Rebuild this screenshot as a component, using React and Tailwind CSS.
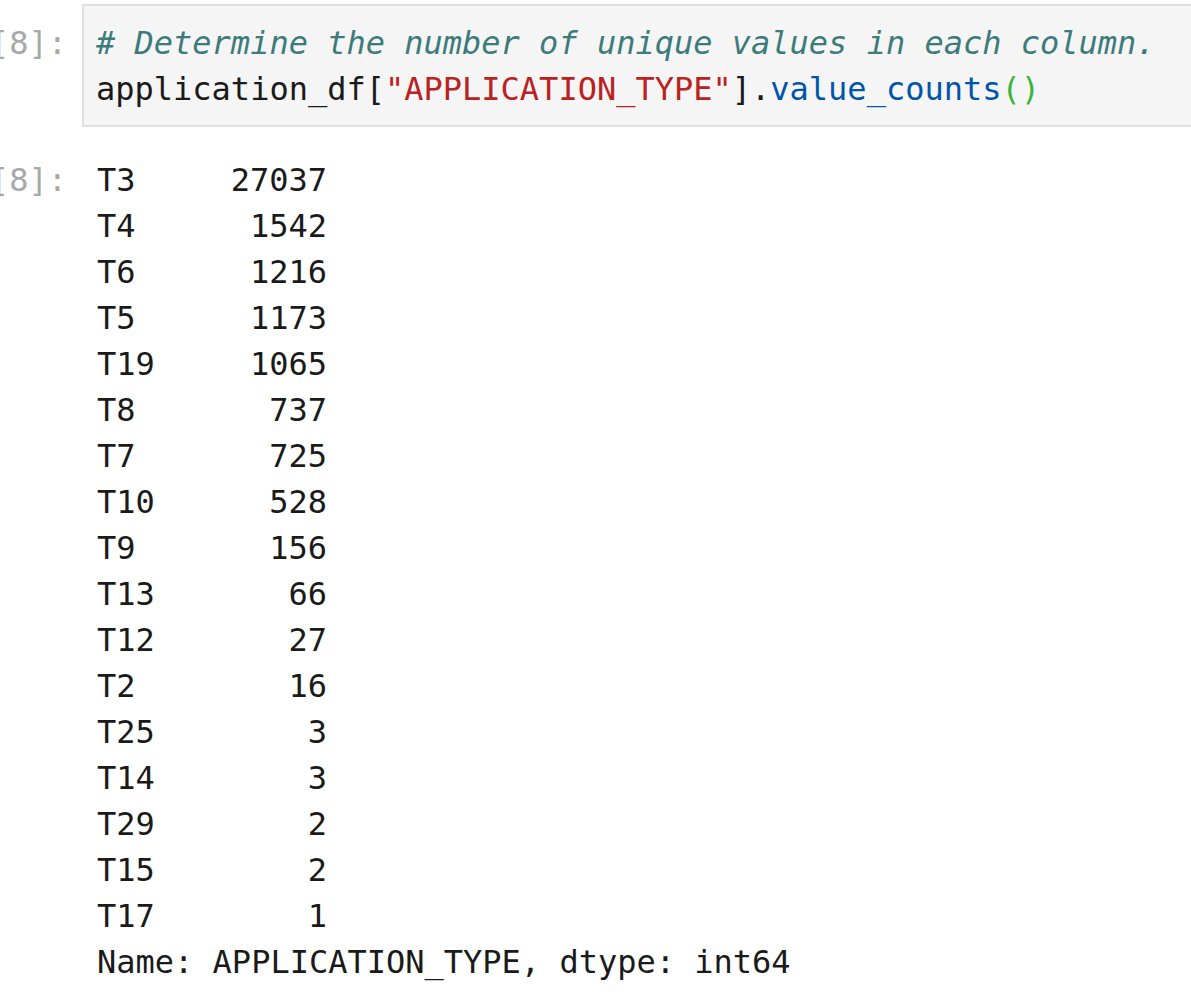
import React from 'react';

const rows = [
  ['T3', '27037'],
  ['T4', '1542'],
  ['T6', '1216'],
  ['T5', '1173'],
  ['T19', '1065'],
  ['T8', '737'],
  ['T7', '725'],
  ['T10', '528'],
  ['T9', '156'],
  ['T13', '66'],
  ['T12', '27'],
  ['T2', '16'],
  ['T25', '3'],
  ['T14', '3'],
  ['T29', '2'],
  ['T15', '2'],
  ['T17', '1'],
];

const mono = "font-['DejaVu_Sans_Mono',monospace] text-[32px] leading-[46px]";

const Prompt = () => (
  <div className={`${mono} w-[67px] shrink-0 overflow-hidden whitespace-pre text-right text-[#a8a8a8] flex justify-end`}>
    <span>[8]:</span>
  </div>
);

export default function App() {
  return (
    <div className="w-[1191px] h-[997px] overflow-hidden bg-white">
      {/* input cell */}
      <div className="flex items-start pt-[4px]">
        <div className="pt-[16px]">
          <Prompt />
        </div>
        <div className="ml-[15px] w-[1120px] shrink-0 border-2 border-[#e0e0e0] bg-[#f5f5f5] pl-[12px] pt-[14px] pb-[13px]">
          <div className={`${mono} whitespace-pre italic text-[#3d7b7b]`}>
            # Determine the number of unique values in each column.
          </div>
          <div className={`${mono} whitespace-pre text-[#1a1a1a]`}>
            application_df[<span className="text-[#ba2121]">"APPLICATION_TYPE"</span>].
            <span className="text-[#0055aa]">value_counts</span>
            <span className="text-[#3bb33b]">()</span>
          </div>
        </div>
      </div>

      {/* output cell */}
      <div className="flex items-start mt-[30px]">
        <Prompt />
        <div className={`${mono} ml-[30px] whitespace-pre text-[#1a1a1a]`}>
          {rows.map(([k, v]) => (
            <div key={k} className="flex">
              <span className="w-[130px]">{k}</span>
              <span className="w-[100px] text-right">{v}</span>
            </div>
          ))}
          <div>Name: APPLICATION_TYPE, dtype: int64</div>
        </div>
      </div>
    </div>
  );
}
